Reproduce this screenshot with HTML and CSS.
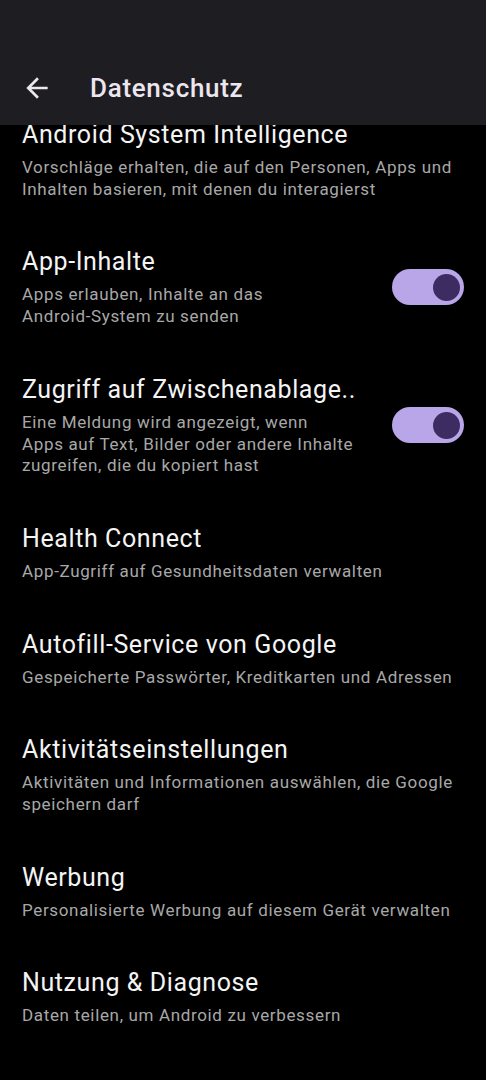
FILE: index.html
```html
<!DOCTYPE html>
<html lang="de">
<head>
    <meta charset="UTF-8">
    <meta name="viewport" content="width=device-width, initial-scale=1.0">
    <title>Datenschutz</title>
    <link rel="stylesheet" href="styles.css">
</head>
<body>

    <div class="appbar">
        <div class="toolbar">
            <svg class="back" width="32" height="32" viewBox="0 0 24 24">
                <path d="M20 11H7.83l5.59-5.59L12 4l-8 8 8 8 1.41-1.41L7.83 13H20v-2z" fill="#ece6f0"/>
            </svg>
            <span class="title">Datenschutz</span>
        </div>
    </div>

    <div class="list">
        <div class="item first">
            <div class="text">
                <div class="item-title">Android System Intelligence</div>
                <div class="item-sub">Vorschläge erhalten, die auf den Personen, Apps und Inhalten basieren, mit denen du interagierst</div>
            </div>
        </div>

        <div class="item">
            <div class="text narrow">
                <div class="item-title">App-Inhalte</div>
                <div class="item-sub">Apps erlauben, Inhalte an das <span class="nowrap">Android-System</span> zu senden</div>
            </div>
            <div class="switch on"><div class="thumb"></div></div>
        </div>

        <div class="item">
            <div class="text narrow">
                <div class="item-title">Zugriff auf Zwischenablage..</div>
                <div class="item-sub">Eine Meldung wird angezeigt, wenn Apps auf Text, Bilder oder andere Inhalte zugreifen, die du kopiert hast</div>
            </div>
            <div class="switch on"><div class="thumb"></div></div>
        </div>

        <div class="item">
            <div class="text">
                <div class="item-title">Health Connect</div>
                <div class="item-sub">App-Zugriff auf Gesundheitsdaten verwalten</div>
            </div>
        </div>

        <div class="item">
            <div class="text">
                <div class="item-title">Autofill-Service von Google</div>
                <div class="item-sub">Gespeicherte Passwörter, Kreditkarten und Adressen</div>
            </div>
        </div>

        <div class="item">
            <div class="text">
                <div class="item-title">Aktivitätseinstellungen</div>
                <div class="item-sub">Aktivitäten und Informationen auswählen, die Google speichern darf</div>
            </div>
        </div>

        <div class="item">
            <div class="text">
                <div class="item-title">Werbung</div>
                <div class="item-sub">Personalisierte Werbung auf diesem Gerät verwalten</div>
            </div>
        </div>

        <div class="item">
            <div class="text">
                <div class="item-title">Nutzung &amp; Diagnose</div>
                <div class="item-sub">Daten teilen, um Android zu verbessern</div>
            </div>
        </div>
    </div>

</body>
</html>
```

FILE: styles.css
```css
body {
    margin: 0;
    background: #000;
    font-family: Roboto, "Noto Sans", sans-serif;
    color: #f2f2f2;
    height: 1080px;
    overflow: hidden;
}

.appbar {
    position: relative;
    z-index: 1;
    height: 125px;
    background: #1e1d21;
    display: flex;
    align-items: flex-end;
}
.toolbar {
    height: 75px;
    display: flex;
    align-items: center;
    padding-left: 21px;
}
.back { width: 32px; height: 32px; margin-right: 37px; }
.toolbar .title { font-size: 26px; font-weight: 500; letter-spacing: 0.7px; color: #ece6f0; }

.list { margin-top: -6px; }

.item {
    display: flex;
    align-items: center;
    padding: 23px 22px;
}
.item.first { padding-top: 0; }
.text { flex: 1; }
.text.narrow { max-width: 332px; margin-right: auto; }
.nowrap { white-space: nowrap; }

.item-title {
    font-size: 25px;
    line-height: 32px;
    letter-spacing: 0.6px;
    color: #f4f4f4;
    white-space: nowrap;
}
.item-sub {
    font-size: 17px;
    line-height: 21.7px;
    letter-spacing: 0.65px;
    color: #a8a8a8;
    margin-top: 6px;
}

.switch {
    width: 72px;
    height: 36px;
    border-radius: 18px;
    background: #b9a6e8;
    display: flex;
    align-items: center;
    justify-content: flex-end;
    padding-right: 4px;
    box-sizing: border-box;
    flex-shrink: 0;
}
.thumb {
    width: 27px;
    height: 27px;
    border-radius: 50%;
    background: #3c2c62;
}
```
